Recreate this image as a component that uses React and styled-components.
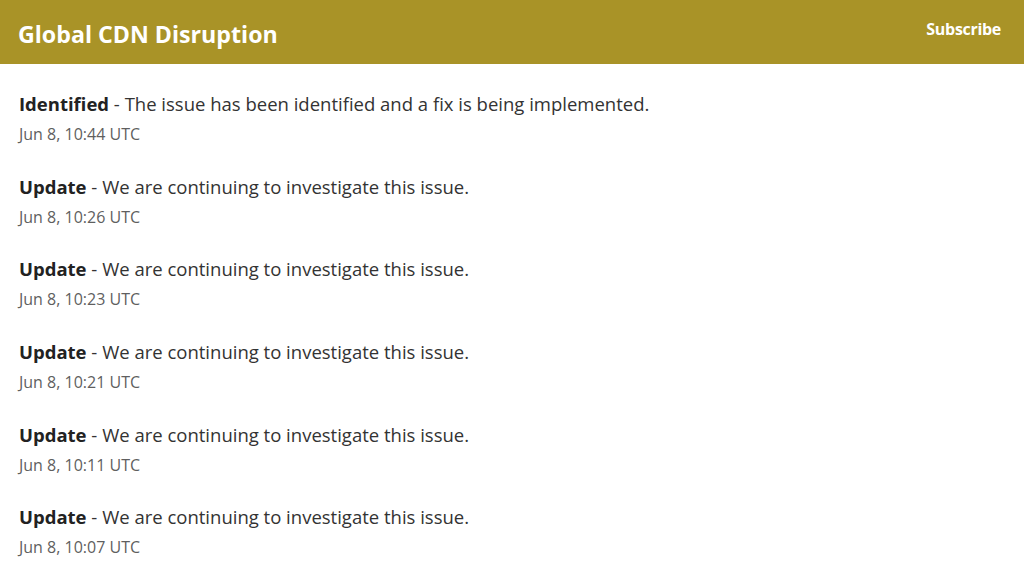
import React from 'react'
import styled, { createGlobalStyle } from 'styled-components'

const Global = createGlobalStyle`
  body {
    margin: 0;
    background: #ffffff;
    font-family: "Open Sans", "Noto Sans", sans-serif;
  }
`

const Header = styled.div`
  height: 64px;
  background-color: #a99327;
  display: flex;
  align-items: center;
  justify-content: space-between;
  padding: 0 23px 0 18px;
  color: #ffffff;
`

const Title = styled.h1`
  margin: 0;
  font-size: 23.2px;
  font-weight: 700;
  padding-top: 4px;
`

const Subscribe = styled.a`
  font-size: 16px;
  font-weight: 700;
  letter-spacing: -0.3px;
  margin-top: -7px;
  cursor: pointer;
`

const List = styled.div`
  padding: 27px 19px 0;
  display: flex;
  flex-direction: column;
  gap: 29.7px;
`

const Entry = styled.div`
  display: flex;
  flex-direction: column;
  gap: 7px;
`

const Message = styled.div`
  font-size: 18.5px;
  line-height: 26px;
  color: #333333;

  b {
    color: #222222;
    font-weight: 700;
  }
`

const Stamp = styled.div`
  font-size: 16px;
  line-height: 20px;
  color: #5f5f5f;
`

const updates = [
  { status: 'Identified', text: 'The issue has been identified and a fix is being implemented.', time: 'Jun 8, 10:44 UTC' },
  { status: 'Update', text: 'We are continuing to investigate this issue.', time: 'Jun 8, 10:26 UTC' },
  { status: 'Update', text: 'We are continuing to investigate this issue.', time: 'Jun 8, 10:23 UTC' },
  { status: 'Update', text: 'We are continuing to investigate this issue.', time: 'Jun 8, 10:21 UTC' },
  { status: 'Update', text: 'We are continuing to investigate this issue.', time: 'Jun 8, 10:11 UTC' },
  { status: 'Update', text: 'We are continuing to investigate this issue.', time: 'Jun 8, 10:07 UTC' },
]

const App = () => {
  return (
    <>
      <Global />
      <Header>
        <Title>Global CDN Disruption</Title>
        <Subscribe>Subscribe</Subscribe>
      </Header>
      <List>
        {updates.map((u, i) => (
          <Entry key={i}>
            <Message><b>{u.status}</b> - {u.text}</Message>
            <Stamp>{u.time}</Stamp>
          </Entry>
        ))}
      </List>
    </>
  )
}

export default App
